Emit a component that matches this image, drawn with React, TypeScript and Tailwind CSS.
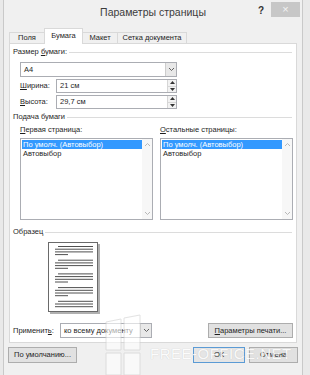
import React from "react";

const Chevron = ({ color = "#606060", up = false }: { color?: string; up?: boolean }) => (
  <svg width="7" height="5" viewBox="0 0 7 5">
    <path d={up ? "M1 4 L3.5 1.5 L6 4" : "M1 1 L3.5 3.5 L6 1"} stroke={color} fill="none" strokeWidth="1" />
  </svg>
);

const Tri = ({ up }: { up?: boolean }) => (
  <svg width="5" height="3" viewBox="0 0 5 3">
    <path d={up ? "M0 3 L2.5 0 L5 3 Z" : "M0 0 L2.5 3 L5 0 Z"} fill="#333" />
  </svg>
);

const GroupHeader = ({ children }: { children: React.ReactNode }) => (
  <div className="flex items-center h-[10px] ml-[3px] mr-[4px]">
    <span className="whitespace-nowrap pr-[2px]">{children}</span>
    <div className="flex-1 border-t border-[#dcdcdc]" />
  </div>
);

const Combo = ({ text, w }: { text: string; w: string }) => (
  <div className={`${w} h-[15px] border border-[#abadb3] bg-white flex items-stretch`}>
    <div className="flex-1 pl-[3px] flex items-center">{text}</div>
    <div className="w-[11px] bg-[#e8e8e8] border-l border-[#cdcdcd] flex items-center justify-center">
      <Chevron />
    </div>
  </div>
);

const Spin = ({ text }: { text: string }) => (
  <div className="w-[121px] h-[14px] border border-[#abadb3] bg-white flex items-stretch">
    <div className="flex-1 pl-[3px] flex items-center">{text}</div>
    <div className="w-[9px] flex flex-col bg-[#f2f2f2] border-l border-[#d6d6d6]">
      <div className="flex-1 flex items-center justify-center border-b border-[#d6d6d6]">
        <Tri up />
      </div>
      <div className="flex-1 flex items-center justify-center">
        <Tri />
      </div>
    </div>
  </div>
);

const ListBox = () => (
  <div className="w-[133px] h-[82px] border border-[#abadb3] bg-white flex">
    <div className="flex-1 pt-[1px] pl-[1px]">
      <div className="h-[9px] leading-[9px] bg-[#3399ff] text-white pl-[1px]">По умолч. (Автовыбор)</div>
      <div className="h-[9px] leading-[9px] pl-[1px]">Автовыбор</div>
    </div>
    <div className="w-[10px] bg-[#f7f7f7] flex flex-col items-center justify-between py-[3px]">
      <Chevron color="#b8b8b8" up />
      <Chevron color="#b8b8b8" />
    </div>
  </div>
);

const Preview = () => {
  const paras = [4.5, 18.2, 31.9, 45.6, 59.3];
  const lines: React.ReactNode[] = [];
  paras.forEach((p, i) => {
    const ys = [p, p + 2.7, p + 5.4, p + 8.1];
    ys.forEach((y, j) => {
      if (y > 67) return;
      const x1 = j === 0 ? 10 : 7;
      const x2 = j === 3 ? 20 : 45;
      lines.push(<line key={`${i}-${j}`} x1={x1} x2={x2} y1={y} y2={y} stroke="#505050" strokeWidth="1" />);
    });
  });
  return (
    <svg width="53" height="73" viewBox="0 0 53 73">
      <rect x="2" y="2" width="50" height="70" fill="#b0b0b0" />
      <rect x="0.5" y="0.5" width="49" height="69" fill="#fff" stroke="#6a6a6a" />
      {lines}
    </svg>
  );
};

export default function App() {
  return (
    <div
      className="w-[310px] h-[375px] bg-[#e9e9e9] flex overflow-hidden text-[7.5px] text-[#1e1e1e] relative"
      style={{ fontFamily: "'Liberation Sans', Arial, sans-serif" }}
    >
      <div className="ml-[3px] w-[300px] h-full bg-[#f0f0f0] border-x border-[#c9c9c9] flex flex-col">
        {/* Title bar */}
        <div className="h-[28px] flex items-start">
          <div className="flex-1" />
          <div className="pt-[5px] text-[10.5px] text-[#3c3c3c] whitespace-nowrap">Параметры страницы</div>
          <div className="flex-1 flex justify-end items-start">
            <div className="pt-[3px] mr-[7px] text-[10px] font-bold text-[#333]">?</div>
            <div className="mt-[2px] mr-[2px] w-[29px] h-[15px] bg-[#c7c7c7] flex items-center justify-center text-[11px] text-[#f4f4f4] leading-none">
              ×
            </div>
          </div>
        </div>

        {/* Tabs */}
        <div className="h-[16px] ml-[5px] flex items-end">
          <div className="w-[35px] h-[11px] mb-[1px] border-l border-t border-[#d9d9d9] bg-[#f0f0f0] flex items-center justify-center">
            Поля
          </div>
          <div className="relative z-10 w-[39px] h-[16px] border-x border-t border-[#d9d9d9] bg-white flex items-center justify-center pb-[1px]">
            Бумага
          </div>
          <div className="w-[34px] h-[11px] mb-[1px] border-t border-[#d9d9d9] bg-[#f0f0f0] flex items-center justify-center">
            Макет
          </div>
          <div className="w-[70px] h-[11px] mb-[1px] border-x border-t border-[#d9d9d9] bg-[#f0f0f0] flex items-center justify-center">
            Сетка документа
          </div>
        </div>

        {/* Panel */}
        <div className="-mt-[1px] ml-[5px] w-[288px] h-[300px] border border-[#d9d9d9] bg-white flex flex-col">
          <div className="mt-[3px]">
            <GroupHeader>
              Размер <u className="underline-offset-1">б</u>умаги:
            </GroupHeader>
          </div>
          <div className="mt-[5px] ml-[10px]">
            <Combo text="A4" w="w-[157px]" />
          </div>
          <div className="mt-[2px] ml-[10px] flex items-center h-[14px]">
            <div className="w-[36px]">
              <u className="underline-offset-1">Ш</u>ирина:
            </div>
            <Spin text="21 см" />
          </div>
          <div className="mt-[2px] ml-[10px] flex items-center h-[14px]">
            <div className="w-[36px]">
              <u className="underline-offset-1">В</u>ысота:
            </div>
            <Spin text="29,7 см" />
          </div>
          <div className="mt-[3px]">
            <GroupHeader>Подача бумаги</GroupHeader>
          </div>
          <div className="mt-[3px] ml-[10px] flex h-[10px] items-center">
            <div className="w-[140px]">
              <u className="underline-offset-1">П</u>ервая страница:
            </div>
            <div>
              <u className="underline-offset-1">О</u>стальные страницы:
            </div>
          </div>
          <div className="mt-[3px] ml-[10px] flex gap-[7px]">
            <ListBox />
            <ListBox />
          </div>
          <div className="mt-[7px]">
            <GroupHeader>Образец</GroupHeader>
          </div>
          <div className="mt-[5px] ml-[38px] h-[70px]">
            <Preview />
          </div>
          <div className="mt-[11px] ml-[3px] mr-[3px] flex items-center h-[15px]">
            <div className="w-[47px]">
              Применит<u className="underline-offset-1">ь</u>:
            </div>
            <Combo text="ко всему документу" w="w-[92px]" />
            <div className="ml-auto w-[85px] h-[15px] bg-[#e1e1e1] border border-[#adadad] flex items-center justify-center">
              <span>
                <u className="underline-offset-1">П</u>араметры печати...
              </span>
            </div>
          </div>
        </div>

        {/* Bottom buttons */}
        <div className="mt-[4px] h-[16px] flex items-stretch mx-[4px]">
          <div className="w-[69px] bg-[#e1e1e1] border border-[#adadad] flex items-center justify-center">
            По умолчанию...
          </div>
          <div className="ml-auto w-[52px] bg-[#e5e5e5] border border-[#5b9bd5] flex items-center justify-center">
            ОК
          </div>
          <div className="ml-[4px] w-[49px] bg-[#e1e1e1] border border-[#adadad] flex items-center justify-center">
            Отмена
          </div>
        </div>
      </div>

      {/* Watermark overlay */}
      <div className="absolute left-[105px] top-[312px] opacity-60 pointer-events-none">
        <svg width="36" height="63" viewBox="0 0 36 63">
          <path d="M1 10 L16 7 L16 38 L1 38 Z" fill="#ffffff" stroke="#d0d0d0" strokeWidth="1" />
          <path d="M19 6 L35 3 L35 38 L19 38 Z" fill="#ffffff" stroke="#d0d0d0" strokeWidth="1" />
          <path d="M1 41 L16 41 L16 63 L1 63 Z" fill="#ffffff" stroke="#d0d0d0" strokeWidth="1" />
          <path d="M19 41 L35 41 L35 63 L19 63 Z" fill="#ffffff" stroke="#d0d0d0" strokeWidth="1" />
        </svg>
      </div>
      <div
        className="absolute left-[150px] top-[343px] text-[15px] tracking-[0.5px] text-white opacity-80 pointer-events-none whitespace-nowrap"
        style={{ textShadow: "0 0 1px #b8b8b8" }}
      >
        FREE-OFFICE.NET
      </div>
    </div>
  );
}
